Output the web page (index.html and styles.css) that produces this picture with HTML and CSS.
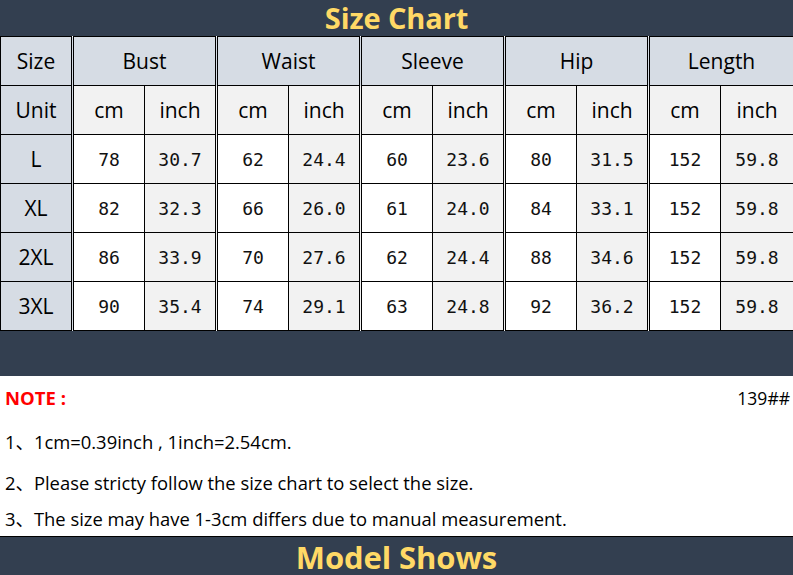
FILE: index.html
```
<!DOCTYPE html>
<html>
<head>
<meta charset="utf-8">
<link rel="stylesheet" href="styles.css">
</head>
<body>
<div class="page">
  <div class="band title-band"><span class="band-title">Size Chart</span></div>
  <table class="chart">
    <colgroup>
      <col class="c"><col class="c"><col class="c"><col class="c"><col class="c"><col class="c"><col class="c"><col class="c"><col class="c"><col class="c"><col class="c-last">
    </colgroup>
    <tr class="head">
      <td class="lab">Size</td>
      <td class="lab grp" colspan="2">Bust</td>
      <td class="lab grp" colspan="2">Waist</td>
      <td class="lab grp" colspan="2">Sleeve</td>
      <td class="lab grp" colspan="2">Hip</td>
      <td class="lab grp" colspan="2">Length</td>
    </tr>
    <tr class="unit">
      <td class="lab">Unit</td>
      <td class="grp">cm</td><td>inch</td>
      <td class="grp">cm</td><td>inch</td>
      <td class="grp">cm</td><td>inch</td>
      <td class="grp">cm</td><td>inch</td>
      <td class="grp">cm</td><td>inch</td>
    </tr>
    <tr class="data">
      <td class="lab sz">L</td>
      <td class="grp">78</td><td class="in">30.7</td>
      <td class="grp">62</td><td class="in">24.4</td>
      <td class="grp">60</td><td class="in">23.6</td>
      <td class="grp">80</td><td class="in">31.5</td>
      <td class="grp">152</td><td class="in">59.8</td>
    </tr>
    <tr class="data">
      <td class="lab sz">XL</td>
      <td class="grp">82</td><td class="in">32.3</td>
      <td class="grp">66</td><td class="in">26.0</td>
      <td class="grp">61</td><td class="in">24.0</td>
      <td class="grp">84</td><td class="in">33.1</td>
      <td class="grp">152</td><td class="in">59.8</td>
    </tr>
    <tr class="data">
      <td class="lab sz">2XL</td>
      <td class="grp">86</td><td class="in">33.9</td>
      <td class="grp">70</td><td class="in">27.6</td>
      <td class="grp">62</td><td class="in">24.4</td>
      <td class="grp">88</td><td class="in">34.6</td>
      <td class="grp">152</td><td class="in">59.8</td>
    </tr>
    <tr class="data">
      <td class="lab sz">3XL</td>
      <td class="grp">90</td><td class="in">35.4</td>
      <td class="grp">74</td><td class="in">29.1</td>
      <td class="grp">63</td><td class="in">24.8</td>
      <td class="grp">92</td><td class="in">36.2</td>
      <td class="grp">152</td><td class="in">59.8</td>
    </tr>
  </table>
  <div class="band spacer-band"></div>
  <div class="notes">
    <div class="note-head">
      <span class="note-label">NOTE :</span>
      <span class="code">139##</span>
    </div>
    <p class="line l1">1、1cm=0.39inch , 1inch=2.54cm.</p>
    <p class="line l2">2、Please stricty follow the size chart to select the size.</p>
    <p class="line l3">3、The size may have 1-3cm differs due to manual measurement.</p>
  </div>
  <div class="band model-band"><span class="band-title">Model Shows</span></div>
</div>
</body>
</html>
```
FILE: styles.css
```
html, body {
  margin: 0;
  padding: 0;
  background: #ffffff;
}

.page {
  width: 793px;
  height: 575px;
  overflow: hidden;
  display: flex;
  flex-direction: column;
  font-family: "Open Sans", "Noto Sans CJK SC", sans-serif;
  color: #000;
}

.band {
  background: #333f50;
  display: flex;
  justify-content: center;
  align-items: center;
}

.title-band {
  height: 36px;
  flex: none;
}

.band-title {
  color: #ffd966;
  font-weight: 700;
  font-size: 29px;
  line-height: 36px;
  letter-spacing: -0.1px;
}

.title-band .band-title {
  margin-top: -1px;
}

.chart {
  border-collapse: collapse;
  table-layout: fixed;
  width: 793px;
  flex: none;
}

.chart col.c { width: 72px; }
.chart col.c-last { width: 73px; }

.chart td {
  border: 1px solid #000;
  text-align: center;
  padding: 0;
  height: 48px;
  background: #ffffff;
  font-size: 21px;
}

.chart td.grp {
  border-left: 3px double #000;
}

.chart td.lab {
  background: #d6dce4;
}

.chart tr.unit td {
  background: #f2f2f2;
}

.chart tr.unit td.lab {
  background: #d6dce4;
}

.chart tr.data td {
  font-family: "DejaVu Sans Mono", monospace;
  font-size: 18px;
  color: #111;
}

.chart tr.data td.sz {
  font-family: "Open Sans", sans-serif;
  font-size: 21px;
  color: #000;
}

.chart tr.data td.in {
  background: #f2f2f2;
}

.spacer-band {
  height: 45px;
  flex: none;
}

.notes {
  flex: 1;
  padding: 0 3px 0 5px;
  font-size: 18.4px;
}

.note-head {
  display: flex;
  justify-content: space-between;
  align-items: center;
  margin-top: 9px;
}

.note-label {
  color: #ff0000;
  font-weight: 700;
  font-size: 18.5px;
}

.code {
  font-size: 17.5px;
}

.line {
  margin: 0;
  line-height: 24px;
  white-space: nowrap;
}

.l1 { margin-top: 20px; }
.l2 { margin-top: 17px; }
.l3 { margin-top: 12px; }

.model-band {
  height: 38px;
  flex: none;
  border-top: 1px solid #000;
}

.model-band .band-title {
  font-size: 31px;
  line-height: 38px;
  margin-top: 1px;
}
```
